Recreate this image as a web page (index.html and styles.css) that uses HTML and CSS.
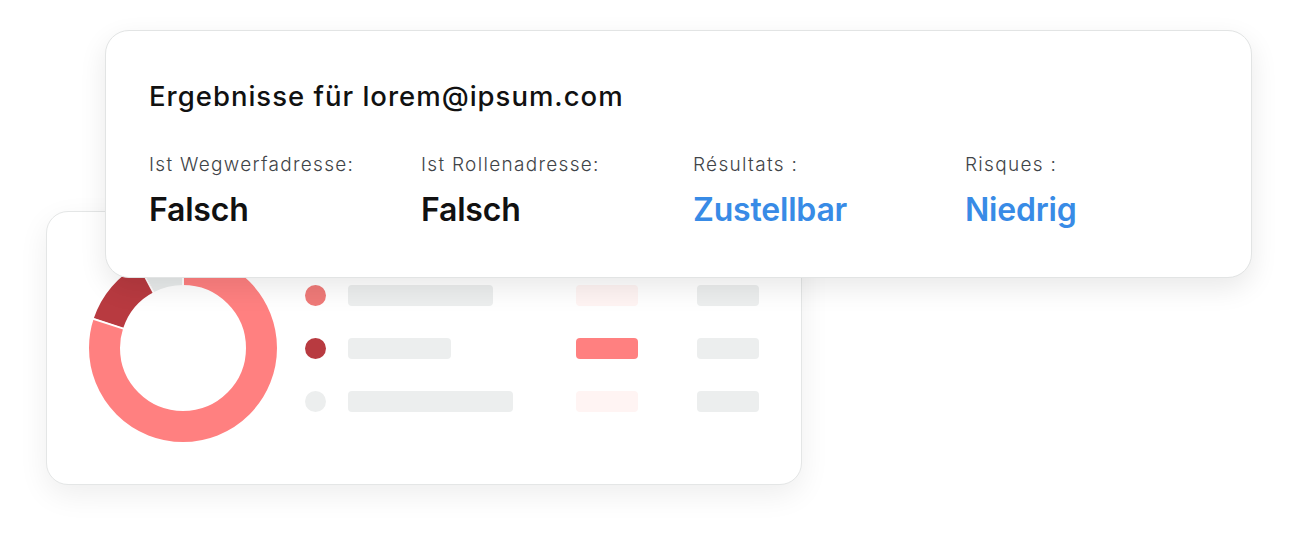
FILE: index.html
```html
<!DOCTYPE html>
<html lang="de">
<head>
<meta charset="utf-8">
<title>Ergebnisse</title>
<link rel="stylesheet" href="styles.css">
</head>
<body>
<div class="stage">
  <section class="chart-card">
    <svg class="donut" width="188" height="188" viewBox="0 0 188 188">
      <g transform="rotate(-90 94 94)">
        <circle cx="94" cy="94" r="78.5" fill="none" stroke="#ff8080" stroke-width="31" stroke-dasharray="394.6 493.2" stroke-dashoffset="0"/>
        <circle cx="94" cy="94" r="78.5" fill="none" stroke="#b83a40" stroke-width="31" stroke-dasharray="60.3 493.2" stroke-dashoffset="-394.6"/>
        <circle cx="94" cy="94" r="78.5" fill="none" stroke="#e8ebeb" stroke-width="31" stroke-dasharray="38.3 493.2" stroke-dashoffset="-454.9"/>
      </g>
      <g stroke="#ffffff" stroke-width="2">
        <line x1="94" y1="0" x2="94" y2="32"/>
        <line x1="94" y1="94" x2="0" y2="63.5" stroke-dasharray="0 61 40"/>
        <line x1="94" y1="94" x2="49.9" y2="11.1" stroke-dasharray="0 61 40"/>
      </g>
    </svg>
    <div class="legend">
      <span class="dot dot-pink"></span><span class="bar bar-name w145"></span><span class="bar bar-faint"></span><span class="bar bar-val"></span>
      <span class="dot dot-red"></span><span class="bar bar-name w103"></span><span class="bar bar-strong"></span><span class="bar bar-val"></span>
      <span class="dot dot-gray"></span><span class="bar bar-name w165"></span><span class="bar bar-faint"></span><span class="bar bar-val"></span>
    </div>
  </section>

  <section class="result-card">
    <h1 class="title">Ergebnisse für lorem@ipsum.com</h1>
    <div class="stats">
      <div class="stat">
        <div class="label">Ist Wegwerfadresse:</div>
        <div class="value">Falsch</div>
      </div>
      <div class="stat">
        <div class="label">Ist Rollenadresse:</div>
        <div class="value">Falsch</div>
      </div>
      <div class="stat">
        <div class="label">Résultats :</div>
        <div class="value value-blue">Zustellbar</div>
      </div>
      <div class="stat">
        <div class="label">Risques :</div>
        <div class="value value-blue">Niedrig</div>
      </div>
    </div>
  </section>
</div>
</body>
</html>
```

FILE: styles.css
```css
* { box-sizing: border-box; }

html, body {
  margin: 0;
  padding: 0;
  background: #ffffff;
}

body {
  font-family: "Inter", "Noto Sans", sans-serif;
  color: #111111;
}

.stage {
  position: relative;
  width: 1297px;
  height: 545px;
  padding: 211px 0 0 46px;
}

.chart-card {
  width: 756px;
  height: 274px;
  border: 1px solid #e4e6e6;
  border-radius: 22px;
  background: #ffffff;
  box-shadow: 0 10px 30px rgba(0, 0, 0, 0.07);
  display: flex;
  align-items: center;
  padding-left: 42px;
  gap: 28px;
}

.donut {
  display: block;
  flex: none;
}

.legend {
  display: grid;
  grid-template-columns: 43px 228px 121px 62px;
  grid-auto-rows: 21px;
  row-gap: 32px;
  align-items: center;
}

.dot {
  width: 21px;
  height: 21px;
  border-radius: 50%;
}
.dot-pink { background: #ef7a78; }
.dot-red { background: #b83a40; }
.dot-gray { background: #eceeee; }

.bar {
  height: 21px;
  border-radius: 4px;
  background: #eceeee;
}
.w145 { width: 145px; }
.w103 { width: 103px; }
.w165 { width: 165px; }
.bar-faint { width: 62px; background: #fff4f3; }
.bar-strong { width: 62px; background: #ff8080; }
.bar-val { width: 62px; }

.result-card {
  position: absolute;
  left: 105px;
  top: 30px;
  width: 1147px;
  height: 248px;
  background: #ffffff;
  border: 1px solid #e2e4e4;
  border-radius: 24px;
  box-shadow: 0 10px 28px rgba(0, 0, 0, 0.09);
  padding: 48px 43px 0;
}

.title {
  margin: 0;
  font-size: 27.5px;
  line-height: 34px;
  font-weight: 500;
  color: #111111;
  letter-spacing: 1px;
}

.stats {
  display: grid;
  grid-template-columns: repeat(4, 272px);
  margin-top: 39px;
}

.label {
  font-size: 19px;
  line-height: 26px;
  font-weight: 300;
  color: #3f4448;
  letter-spacing: 1.3px;
}

.value {
  margin-top: 12px;
  font-size: 32px;
  line-height: 40px;
  font-weight: 600;
  color: #111111;
  letter-spacing: -0.2px;
}

.value-blue {
  color: #388be6;
}
```
